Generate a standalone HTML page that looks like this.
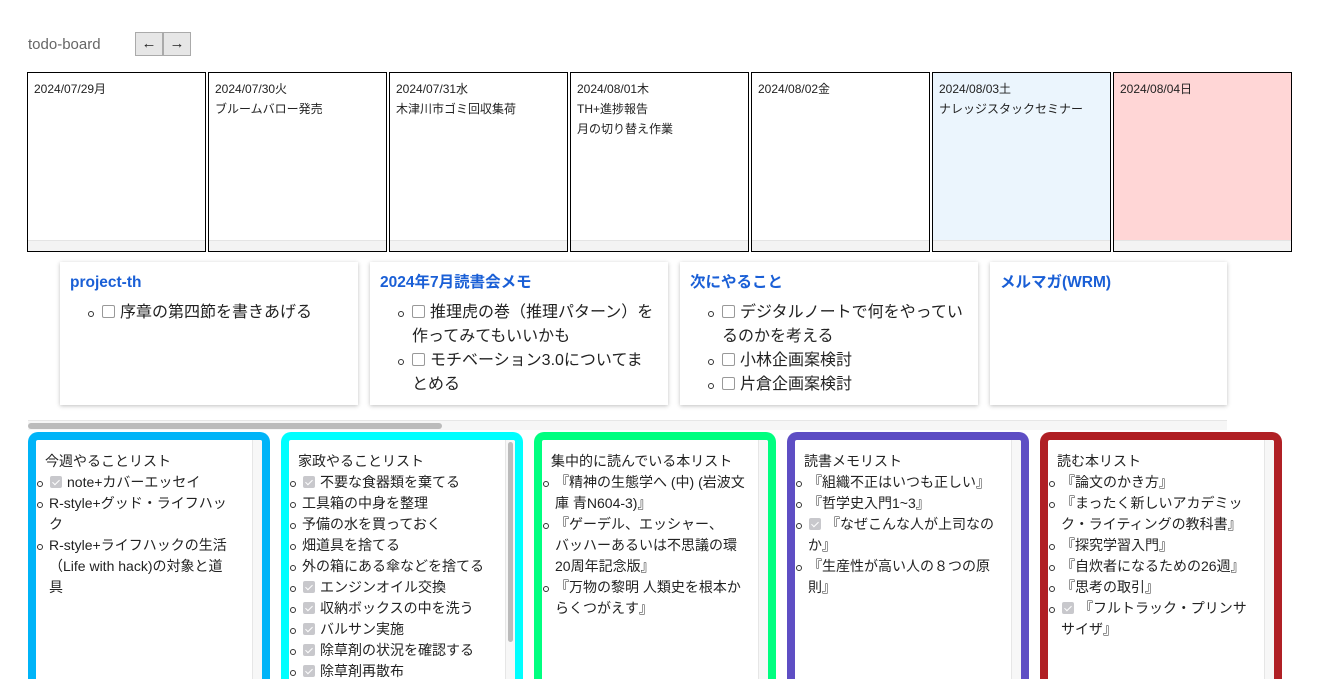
<!DOCTYPE html>
<html><head><meta charset="utf-8"><style>
*{box-sizing:border-box;margin:0;padding:0}
html,body{width:1320px;height:679px;overflow:hidden}
body{background:#fff;font-family:"Liberation Sans","Noto Sans CJK JP",sans-serif;color:#222;position:relative}
.hdr{position:absolute;left:28px;top:36px;font-size:15px;color:#666}
.btns{position:absolute;left:135px;top:32px;display:flex}
.btns span{display:block;width:28px;height:24px;background:#e6e6e6;border:1px solid #aaa;font-size:15px;text-align:center;line-height:21px;color:#222}
.day{position:absolute;top:72px;width:179px;height:180px;border:1px solid #000;font-size:12px;line-height:20px;padding:6px 6px;overflow:hidden}
.day:after{content:"";position:absolute;left:0;right:0;bottom:0;height:10px;background:#f3f3f3;border-top:1px solid #e4e4e4}
.card{position:absolute;top:262px;height:143px;width:298px;background:#fff;box-shadow:0 1px 4px rgba(0,0,0,.25);padding:11px 10px}
.card h3{font-size:15.5px;line-height:20px;height:20px;color:#1a5fd6;font-weight:bold;margin-bottom:8px}
.card ul{list-style:none;padding-left:20px;font-size:16px;line-height:24px}
.card li{position:relative;padding-left:12px}
.card li:before{content:"";position:absolute;left:-2px;top:10px;width:4px;height:4px;border:1px solid #333;border-radius:50%}
.cb{display:inline-block;width:13px;height:13px;border:1px solid #999;border-radius:2px;vertical-align:-1px;margin-right:5px;background:#fff}
.track{position:absolute;left:28px;top:420px;width:1199px;height:10px;background:#f6f6f6;border-top:1px solid #e6e6e6}
.thumb{position:absolute;left:28px;top:423px;width:414px;height:6px;background:#bbb;border-radius:3px}
.box{position:absolute;top:432px;width:242px;height:260px;border:8px solid;border-bottom:none;border-radius:10px 10px 0 0;background:#fff;overflow:hidden}
.box .gut{position:absolute;right:0;top:0;bottom:0;width:10px;background:#f7f7f7;border-left:1px solid #e6e6e6}
.box .in{padding:11px 0 0 9px;font-size:14px;line-height:21px;width:206px}
.box ul{list-style:none;margin-left:-9px}
.box li{position:relative;padding-left:13px}
.box li:before{content:"";position:absolute;left:1px;top:9px;width:4px;height:4px;border:1px solid #333;border-radius:50%}
.ck{display:inline-block;width:12px;height:12px;background:#c8c8cc;border-radius:2px;vertical-align:-1px;margin:0 5px 0 1px;position:relative}
.ck:after{content:"";position:absolute;left:4px;top:2px;width:3px;height:6px;border:solid #fff;border-width:0 1.5px 1.5px 0;transform:rotate(45deg)}
</style></head><body>
<div class="hdr">todo-board</div>
<div class="btns"><span>←</span><span>→</span></div>

<div class="day" style="left:27px">2024/07/29月</div>
<div class="day" style="left:208px">2024/07/30火<br>ブルームバロー発売</div>
<div class="day" style="left:389px">2024/07/31水<br>木津川市ゴミ回収集荷</div>
<div class="day" style="left:570px">2024/08/01木<br>TH+進捗報告<br>月の切り替え作業</div>
<div class="day" style="left:751px">2024/08/02金</div>
<div class="day" style="left:932px;background:#ebf5fd">2024/08/03土<br>ナレッジスタックセミナー</div>
<div class="day" style="left:1113px;background:#ffd6d6">2024/08/04日</div>

<div class="card" style="left:60px"><h3>project-th</h3><ul><li><span class="cb"></span>序章の第四節を書きあげる</li></ul></div>
<div class="card" style="left:370px"><h3>2024年7月読書会メモ</h3><ul><li><span class="cb"></span>推理虎の巻（推理パターン）を作ってみてもいいかも</li><li><span class="cb"></span>モチベーション3.0についてまとめる</li></ul></div>
<div class="card" style="left:680px"><h3>次にやること</h3><ul><li><span class="cb"></span>デジタルノートで何をやっているのかを考える</li><li><span class="cb"></span>小林企画案検討</li><li><span class="cb"></span>片倉企画案検討</li></ul></div>
<div class="card" style="left:990px;width:237px"><h3>メルマガ(WRM)</h3></div>

<div class="track"></div><div class="thumb"></div>

<div class="box" style="left:28px;border-color:#00b4f8"><div class="gut"></div><div class="in"><div>今週やることリスト</div><ul><li><span class="ck"></span>note+カバーエッセイ</li><li>R-style+グッド・ライフハッ<br>ク</li><li>R-style+ライフハックの生活<br>（Life with hack)の対象と道<br>具</li></ul></div></div>
<div class="box" style="left:281px;border-color:#00ffff"><div class="gut"><div style="position:absolute;left:2px;top:2px;width:5px;height:200px;background:#bbb;border-radius:3px"></div></div><div class="in"><div>家政やることリスト</div><ul><li><span class="ck"></span>不要な食器類を棄てる</li><li>工具箱の中身を整理</li><li>予備の水を買っておく</li><li>畑道具を捨てる</li><li>外の箱にある傘などを捨てる</li><li><span class="ck"></span>エンジンオイル交換</li><li><span class="ck"></span>収納ボックスの中を洗う</li><li><span class="ck"></span>バルサン実施</li><li><span class="ck"></span>除草剤の状況を確認する</li><li><span class="ck"></span>除草剤再散布</li></ul></div></div>
<div class="box" style="left:534px;border-color:#00ff80"><div class="gut"></div><div class="in"><div>集中的に読んでいる本リスト</div><ul><li>『精神の生態学へ (中) (岩波文<br>庫 青N604-3)』</li><li>『ゲーデル、エッシャー、<br>バッハーあるいは不思議の環<br>20周年記念版』</li><li>『万物の黎明 人類史を根本か<br>らくつがえす』</li></ul></div></div>
<div class="box" style="left:787px;border-color:#5e4ec4"><div class="gut"></div><div class="in"><div>読書メモリスト</div><ul><li>『組織不正はいつも正しい』</li><li>『哲学史入門1~3』</li><li><span class="ck"></span>『なぜこんな人が上司なの<br>か』</li><li>『生産性が高い人の８つの原<br>則』</li></ul></div></div>
<div class="box" style="left:1040px;border-color:#b02025"><div class="gut"></div><div class="in"><div>読む本リスト</div><ul><li>『論文のかき方』</li><li>『まったく新しいアカデミッ<br>ク・ライティングの教科書』</li><li>『探究学習入門』</li><li>『自炊者になるための26週』</li><li>『思考の取引』</li><li><span class="ck"></span>『フルトラック・プリンサ<br>サイザ』</li></ul></div></div>
</body></html>
